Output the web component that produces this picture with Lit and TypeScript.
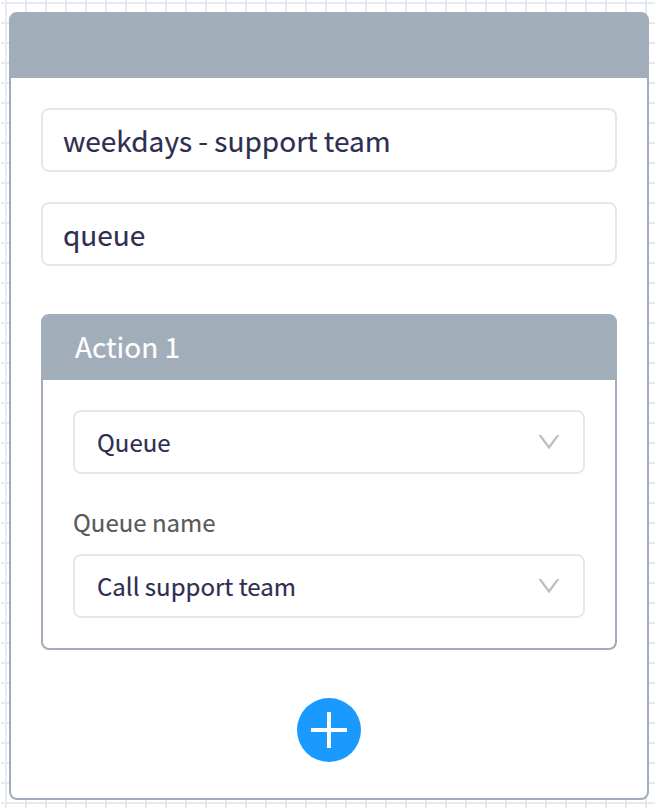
import { LitElement, html, css } from "lit";
import { customElement, property } from "lit/decorators.js";

@customElement("select-box")
class SelectBox extends LitElement {
  @property() value = "";

  static styles = css`
    :host {
      display: flex;
      align-items: center;
      justify-content: space-between;
      box-sizing: border-box;
      height: 64px;
      padding: 0 23px 0 22px;
      border: 2px solid #e4e8ed;
      border-radius: 8px;
      background: #fff;
      color: #2d2e50;
      font-size: 24px;
      line-height: 60px;
    }
    .value {
      white-space: nowrap;
    }
    .arrow {
      display: block;
      flex: none;
    }
  `;

  render() {
    return html`
      <span class="value">${this.value}</span>
      <svg class="arrow" width="22" height="14" viewBox="0 0 22 14">
        <path d="M0.4 0H3.2L11 10.4L18.8 0H21.6L11.8 13.4Q11 14.3 10.2 13.4Z" fill="#bfbfbf" />
      </svg>
    `;
  }
}

@customElement("app-root")
class AppRoot extends LitElement {
  static styles = css`
    :host {
      display: block;
      box-sizing: border-box;
      height: 808px;
      padding: 12px 7px 8px 9px;
      overflow: hidden;
      font-family: "Noto Sans CJK SC", "Noto Sans", sans-serif;
      -webkit-text-stroke: 0.16px currentColor;
      color: #2d2e50;
      background:
        linear-gradient(#fff, #fff) 0 0 / 1px 100% no-repeat,
        linear-gradient(#fff, #fff) 100% 0 / 1px 100% no-repeat,
        linear-gradient(90deg, #e6e9ef 2px, transparent 2px) 5px 0 / 20px 20px,
        linear-gradient(#e6e9ef 2px, transparent 2px) 0 2px / 20px 20px,
        #fff;
    }
    .card,
    .action {
      box-sizing: border-box;
      border: 2px solid #a1adb9;
      border-radius: 8px;
      background: #fff;
    }
    .card {
      height: 788px;
    }
    .bar {
      height: 64px;
      background: #a1adb9;
      border-radius: 5px 5px 0 0;
    }
    .body {
      display: flex;
      flex-direction: column;
      padding: 30px 30px 0;
    }
    .field {
      box-sizing: border-box;
      height: 64px;
      margin-bottom: 30px;
      padding: 0 20px;
      border: 2px solid #e4e8ed;
      border-radius: 8px;
      font-size: 28px;
      line-height: 60px;
      white-space: nowrap;
    }
    .action {
      height: 336px;
      margin-top: 18px;
    }
    .title {
      box-sizing: border-box;
      padding-left: 32px;
      color: #fff;
      font-size: 28px;
      line-height: 60px;
    }
    .content {
      padding: 30px 30px 0;
    }
    .label {
      margin-top: 30px;
      height: 50px;
      color: #595959;
      font-size: 24px;
      line-height: 36px;
    }
    .add {
      display: block;
      align-self: center;
      margin-top: 48px;
    }
  `;

  render() {
    return html`
      <div class="card">
        <div class="bar"></div>
        <div class="body">
          <div class="field">weekdays - support team</div>
          <div class="field">queue</div>
          <div class="action">
            <div class="bar title">Action 1</div>
            <div class="content">
              <select-box value="Queue"></select-box>
              <div class="label">Queue name</div>
              <select-box value="Call support team"></select-box>
            </div>
          </div>
          <svg class="add" width="64" height="64" viewBox="0 0 64 64">
            <circle cx="32" cy="32" r="32" fill="#1a9aff" />
            <path d="M14 32H50M32 14V50" stroke="#fff" stroke-width="4" />
          </svg>
        </div>
      </div>
    `;
  }
}
